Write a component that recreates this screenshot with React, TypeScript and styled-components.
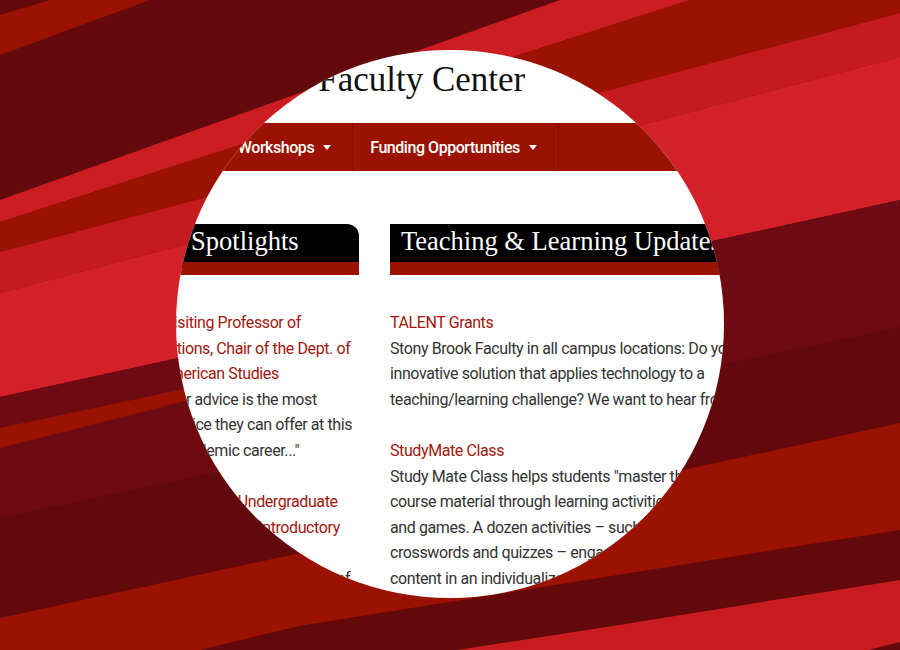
import React from 'react';
import styled, { createGlobalStyle } from 'styled-components';

/**
 * Page reset.
 */
const GlobalStyle = createGlobalStyle`
  html, body {
    margin: 0;
    padding: 0;
  }

  body {
    width: 900px;
    height: 650px;
    overflow: hidden;
    background: #63090b;
  }
`;

/**
 * Full frame, centres the lens.
 */
const Stage = styled.div`
  position: relative;
  width: 900px;
  height: 650px;
  box-sizing: border-box;
  padding-bottom: 2px;
  display: grid;
  place-items: center;
  overflow: hidden;
`;

/**
 * Diagonal stripe artwork behind the lens.
 */
const Backdrop = styled.svg`
  position: absolute;
  inset: 0;
  width: 900px;
  height: 650px;
`;

/**
 * Round window onto the website.
 */
const Lens = styled.div`
  position: relative;
  width: 548px;
  height: 548px;
  border-radius: 50%;
  overflow: hidden;
  background: #fff;
`;

/**
 * Website inside the lens, in frame coordinates.
 */
const Page = styled.div`
  width: 900px;
  margin: -50px 0 0 -176px;
  font-family: Roboto, 'Liberation Sans', sans-serif;
`;

const Masthead = styled.header`
  height: 123px;
  box-sizing: border-box;
  padding: 60px 0 0 255px;
`;

const SiteTitle = styled.h1`
  margin: 0;
  font: 400 35px/40px 'Liberation Serif', serif;
  color: #111;
`;

const Nav = styled.nav`
  display: flex;
  height: 48px;
  padding-left: 159px;
  background: #9b1200;
`;

const NavItem = styled.a`
  display: flex;
  align-items: center;
  gap: 9px;
  padding: 1px 21px 0 17px;
  border-right: 1px solid rgba(0, 0, 0, 0.18);
  color: #fff;
  font-size: 16px;
  font-weight: 500;
  letter-spacing: -0.45px;
  text-decoration: none;
  white-space: nowrap;

  &::after {
    content: '';
    border-left: 4px solid transparent;
    border-right: 4px solid transparent;
    border-top: 5px solid #fff;
  }
`;

const Columns = styled.main`
  display: grid;
  grid-template-columns: 265px 450px;
  column-gap: 31px;
  padding: 53px 0 0 94px;
`;

const Column = styled.section`
  display: flex;
  flex-direction: column;
`;

const SectionHead = styled.h2<{ $rounded?: boolean }>`
  position: relative;
  height: 38px;
  margin: 0 0 35px;
  padding: 0 11px;
  box-sizing: content-box;
  background: #000;
  border-bottom: 13px solid #9b1200;
  border-top-right-radius: ${(p) => (p.$rounded ? '12px' : '0')};
  color: #fff;
  font: 400 26.5px/35px 'Liberation Serif', serif;
  white-space: nowrap;
  overflow: hidden;
`;

const Marker = styled.svg`
  position: absolute;
  left: 21px;
  top: 38px;
`;

const Entry = styled.article`
  margin-bottom: 25.6px;
  font-size: 16px;
  line-height: 25.6px;
  letter-spacing: -0.4px;
  white-space: nowrap;
`;

const EntryLink = styled.a`
  display: block;
  color: #a3160d;
  text-decoration: none;
`;

const Summary = styled.p`
  margin: 0;
  color: #333;
`;

const stripes = [
  { fill: '#9b1200', points: '0,15 50,0 150,0 0,55' },
  { fill: '#cc1d22', points: '0,200 560,0 690,0 0,222' },
  { fill: '#9b1200', points: '0,222 690,0 900,0 900,13 0,252' },
  { fill: '#c51b1f', points: '0,252 900,13 900,57 0,293' },
  { fill: '#d42129', points: '0,293 900,57 900,200 0,397' },
  { fill: '#6e0b12', points: '0,397 900,200 900,327 0,518' },
  { fill: '#9b1200', points: '0,428 260,373 260,382 0,448' },
  { fill: '#9b1200', points: '0,618 900,423 900,530 600,578 300,626 200,650 0,650' },
  { fill: '#63090b', points: '200,650 300,626 600,578 900,530 900,580 600,628 457,650' },
  { fill: '#c81c20', points: '457,650 600,628 900,580 900,650' },
  { fill: '#63090b', points: '868,650 900,642 900,650' },
];

const Star = () => (
  <Marker width="28" height="26" viewBox="0 0 28 26">
    <polygon points="0,12 28,12 14,26" fill="#9b1200" />
    <polygon
      points="14,3 15.35,6.64 19.23,6.8 16.19,9.21 17.23,12.95 14,10.8 10.77,12.95 11.81,9.21 8.77,6.8 12.65,6.64"
      fill="#fff"
    />
  </Marker>
);

const App: React.FC = () => {
  return (
    <>
      <GlobalStyle />
      <Stage>
        <Backdrop viewBox="0 0 900 650" preserveAspectRatio="none">
          <rect width="900" height="650" fill="#63090b" />
          {stripes.map((s, i) => (
            <polygon key={i} points={s.points} fill={s.fill} />
          ))}
        </Backdrop>
        <Lens>
          <Page>
            <Masthead>
              <SiteTitle>The Faculty Center</SiteTitle>
            </Masthead>
            <Nav>
              <NavItem>Events &amp; Workshops</NavItem>
              <NavItem>Funding Opportunities</NavItem>
            </Nav>
            <Columns>
              <Column>
                <SectionHead $rounded>Faculty Spotlights</SectionHead>
                <Entry>
                  <EntryLink>
                    Jane Doe, Visiting Professor of
                    <br />
                    Communications, Chair of the Dept. of
                    <br />
                    and Latin American Studies
                  </EntryLink>
                  <Summary>
                    "My top career advice is the most
                    <br />
                    significant advice they can offer at this
                    <br />
                    stage of an academic career..."
                  </Summary>
                </Entry>
                <Entry>
                  <EntryLink>
                    Scott Lee, Director of Undergraduate
                    <br />
                    Studies and Manager of Introductory
                    <br />
                    Chemistry Labs
                  </EntryLink>
                  <Summary>"The first year is the true foundation of</Summary>
                </Entry>
              </Column>
              <Column>
                <SectionHead>
                  Teaching &amp; Learning Updates
                  <Star />
                </SectionHead>
                <Entry>
                  <EntryLink>TALENT Grants</EntryLink>
                  <Summary>
                    Stony Brook Faculty in all campus locations: Do you have an
                    <br />
                    innovative solution that applies technology to a
                    <br />
                    teaching/learning challenge? We want to hear from you!
                  </Summary>
                </Entry>
                <Entry>
                  <EntryLink>StudyMate Class</EntryLink>
                  <Summary>
                    Study Mate Class helps students "master the
                    <br />
                    course material through learning activities
                    <br />
                    and games. A dozen activities – such as
                    <br />
                    crosswords and quizzes – engage students
                    <br />
                    content in an individualized way.
                  </Summary>
                </Entry>
              </Column>
            </Columns>
          </Page>
        </Lens>
      </Stage>
    </>
  );
};

export default App;
